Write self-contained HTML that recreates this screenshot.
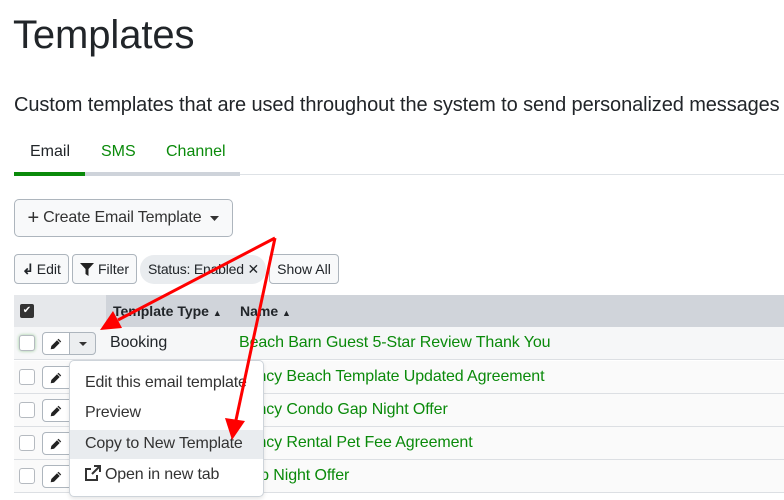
<!DOCTYPE html>
<html><head><style>
*{box-sizing:border-box;margin:0;padding:0}
body{width:784px;height:500px;overflow:hidden;background:#fff;font-family:"Liberation Sans",Arial,sans-serif;color:#212529;position:relative}
.a{position:absolute;white-space:nowrap}
.btn{position:absolute;border:1px solid #adb5bd;border-radius:4px;background:#f8f9fa;font-size:14px;display:flex;align-items:center;justify-content:center}
.g{color:#0a8a0a}
.row{position:absolute;left:14px;width:770px;height:33px;border-bottom:1px solid #dcdfe3;background:#fafafa}
.cb{position:absolute;left:19px;width:16px;height:16px;border:1px solid #b5bac0;border-radius:3px;background:#fff}
.pen{position:absolute;left:42px;width:28px;height:23px;border:1px solid #adb5bd;border-radius:4px 0 0 4px;background:#fff;display:flex;align-items:center;justify-content:center}
.txt{position:absolute;font-size:16px;white-space:nowrap;letter-spacing:-0.1px;top:0}
.mi{position:absolute;left:85px;font-size:16px;color:#333;letter-spacing:-0.15px}
</style></head><body>
<div class="a" style="left:13px;top:13px;font-size:40px;letter-spacing:-0.1px;color:#212529">Templates</div>
<div class="a" style="left:14px;top:94px;font-size:20px;letter-spacing:-0.1px;width:770px;overflow:hidden">Custom templates that are used throughout the system to send personalized messages to</div>
<div class="a" style="left:30px;top:143px;font-size:16px">Email</div>
<div class="a g" style="left:101px;top:143px;font-size:16px">SMS</div>
<div class="a g" style="left:166px;top:143px;font-size:16px">Channel</div>
<div class="a" style="left:14px;top:174px;width:770px;height:1px;background:#dee2e6"></div>
<div class="a" style="left:85px;top:172px;width:155px;height:4px;background:#ced3da"></div>
<div class="a" style="left:14px;top:172px;width:71px;height:4px;background:#0a8a0a"></div>
<div class="btn" style="left:14px;top:199px;width:219px;height:38px;font-size:16px;color:#333;border-radius:5px;letter-spacing:-0.15px"><span style="font-size:20px;margin-right:4px">+</span>Create Email Template <svg width="9" height="5" style="margin-left:9px"><path d="M0 0H9L4.5 5Z" fill="#333"/></svg></div>
<div class="btn" style="left:14px;top:254px;width:55px;height:30px"><b style="margin-right:3px">↲</b>Edit</div>
<div class="btn" style="left:72px;top:254px;width:65px;height:30px"><svg width="14" height="13" viewBox="0 0 14 13" style="margin-right:4px"><path d="M0 0H14L8.5 6V13L5.5 11V6Z" fill="#222"/></svg>Filter</div>
<div class="a" style="left:140px;top:255px;width:126px;height:29px;background:#e9ecef;border-radius:14px;font-size:14px;padding:6px 0 0 8px;letter-spacing:-0.2px">Status: Enabled ✕</div>
<div class="btn" style="left:269px;top:254px;width:70px;height:30px">Show All</div>
<div class="a" style="left:14px;top:295px;width:770px;height:32px;background:#d0d4da"></div>
<div class="a" style="left:14px;top:295px;width:92px;height:32px;background:#e6e8eb"></div>
<div class="a" style="left:20px;top:304px;width:14px;height:14px;background:#333;border-radius:2px;color:#fff;font-size:10px;text-align:center;line-height:14px">✔</div>
<div class="a" style="left:113px;top:303px;font-size:14px;font-weight:bold">Template Type <span style="font-size:9px">▲</span></div>
<div class="a" style="left:240px;top:303px;font-size:14px;font-weight:bold">Name <span style="font-size:9px">▲</span></div>
<div class="row" style="top:327px;background:#f6f7f8"></div>
<div class="row" style="top:361px"></div>
<div class="row" style="top:394px"></div>
<div class="row" style="top:427px"></div>
<div class="row" style="top:460px"></div>
<div class="cb" style="top:335px;box-shadow:0 0 3px #9c9"></div>
<div class="cb" style="top:369px"></div><div class="cb" style="top:402px"></div><div class="cb" style="top:435px"></div><div class="cb" style="top:468px"></div>
<svg width="0" height="0" style="position:absolute"><defs><symbol id="p" viewBox="0 0 12 12"><path d="M8.5 0.8L11.2 3.5L4 10.7L0.7 11.3L1.3 8Z" fill="#222"/><path d="M7.3 2L10 4.7" stroke="#fff" stroke-width="0.8"/></symbol></defs></svg>
<div class="pen" style="top:332px"><svg width="12" height="12"><use href="#p"/></svg></div>
<div class="pen" style="top:366px"><svg width="12" height="12"><use href="#p"/></svg></div>
<div class="pen" style="top:399px"><svg width="12" height="12"><use href="#p"/></svg></div>
<div class="pen" style="top:432px"><svg width="12" height="12"><use href="#p"/></svg></div>
<div class="pen" style="top:465px"><svg width="12" height="12"><use href="#p"/></svg></div>
<div class="a" style="left:69px;top:332px;width:27px;height:23px;border:1px solid #adb5bd;border-radius:0 4px 4px 0;background:#eceef0;display:flex;align-items:center;justify-content:center"><svg width="8" height="4"><path d="M0 0H8L4 4Z" fill="#333"/></svg></div>
<div class="txt" style="left:110px;top:334px">Booking</div>
<div class="txt g" style="left:239px;top:334px">Beach Barn Guest 5-Star Review Thank You</div>
<div class="txt g" style="left:239px;top:368px">Fancy Beach Template Updated Agreement</div>
<div class="txt g" style="left:239px;top:401px">Fancy Condo Gap Night Offer</div>
<div class="txt g" style="left:239px;top:434px">Fancy Rental Pet Fee Agreement</div>
<div class="txt g" style="left:239px;top:467px">Gap Night Offer</div>
<div class="a" style="left:69px;top:360px;width:195px;height:137px;background:#fff;border:1px solid #ced4da;border-radius:5px;box-shadow:0 2px 4px rgba(0,0,0,.1)"></div>
<div class="a" style="left:70px;top:430px;width:193px;height:29px;background:#e9ecef"></div>
<div class="mi" style="top:374px">Edit this email template</div>
<div class="mi" style="top:404px">Preview</div>
<div class="mi" style="top:435px">Copy to New Template</div>
<div class="mi" style="top:465px"><svg width="16" height="16" viewBox="0 0 16 16" style="vertical-align:-2px;margin-right:4px"><path d="M9 1H15V7M15 1L7 9M12 10V15H1V4H6" fill="none" stroke="#333" stroke-width="2"/></svg>Open in new tab</div>
<svg class="a" style="left:0;top:0" width="784" height="500"><g stroke="#f00" stroke-width="3" fill="#f00">
<line x1="275" y1="238" x2="118" y2="320"/><polygon points="100,330 113,311 122,328" stroke="none"/>
<line x1="275" y1="238" x2="236" y2="420"/><polygon points="232,440 225,418 245,421" stroke="none"/>
</g></svg>
</body></html>
